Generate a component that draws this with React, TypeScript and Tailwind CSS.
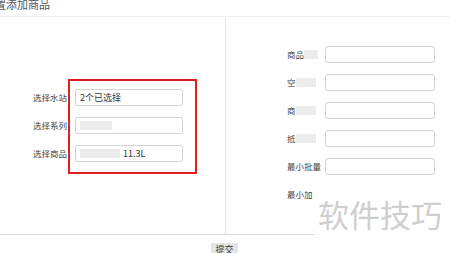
import React from 'react';

const font = { fontFamily: '"Noto Sans CJK SC", "Noto Sans", sans-serif' };

// petit bloc flouté (zones masquées de la capture)
const Blur = ({ w }: { w: number }) => (
  <span className="inline-block h-[9px] bg-[#ececec] align-middle" style={{ width: w }} />
);

const LeftRow = ({ label, children }: { label: string; children?: React.ReactNode }) => (
  <div className="flex items-center h-[17px]">
    <span className="w-[40px] shrink-0 text-[8.5px] leading-none text-[#444] whitespace-nowrap">{label}</span>
    <div className="ml-[2px] w-[108px] h-[17px] border border-[#d4d4d4] rounded-[2px] flex items-center px-[4px] text-[9px] text-[#333] gap-[3px] bg-white">
      {children}
    </div>
  </div>
);

const RightRow = ({ label, input = true }: { label: React.ReactNode; input?: boolean }) => (
  <div className="flex items-center h-[17px]">
    <span className="w-[38px] shrink-0 text-[8.5px] leading-none text-[#444] whitespace-nowrap flex items-center">{label}</span>
    {input && <div className="w-[110px] h-[17px] border border-[#d4d4d4] rounded-[3px] bg-white" />}
  </div>
);

const App = () => {
  return (
    <div className="relative w-[450px] h-[253px] overflow-hidden bg-white" style={font}>
      <div className="h-[20px] border-b border-[#eeeeee]">
        <div className="-mt-[3px] -ml-[5px] text-[11px] text-[#555] leading-[14px]">置添加商品</div>
      </div>

      <div className="flex h-[217px]">
        <div className="w-[226px] border-r border-[#e4e4e4] pl-[33px] pt-[72px] flex flex-col gap-[11px]">
          <LeftRow label="选择水站">2个已选择</LeftRow>
          <LeftRow label="选择系列"><Blur w={32} /></LeftRow>
          <LeftRow label="选择商品"><Blur w={40} /><span>11.3L</span></LeftRow>
        </div>
        <div className="flex-1 pl-[61px] pt-[29px] flex flex-col gap-[11px]">
          <RightRow label={<>商品<Blur w={14} /></>} />
          <RightRow label={<>空<Blur w={20} /></>} />
          <RightRow label={<>商<Blur w={20} /></>} />
          <RightRow label={<>抵<Blur w={20} /></>} />
          <RightRow label="最小批量" />
          <RightRow label="最小加" input={false} />
        </div>
      </div>

      <div className="border-t border-[#dcdcdc] pl-[211px] pt-[8px]">
        <div className="w-[27px] h-[14px] bg-[#e4e4e4] text-[9px] text-[#333] flex items-center justify-center">提交</div>
      </div>

      {/* annotation rouge */}
      <div className="absolute left-[68px] top-[79px] w-[129px] h-[95px] border-2 border-[#e02020]" />

      {/* filigrane */}
      <div className="absolute left-[315px] top-[190px] w-[135px] h-[63px] bg-white flex items-start">
        <span className="mt-[6px] ml-[3px] text-[31px] leading-[36px] text-[#cfcfcf]">软件技巧</span>
      </div>
    </div>
  );
};

export default App;
